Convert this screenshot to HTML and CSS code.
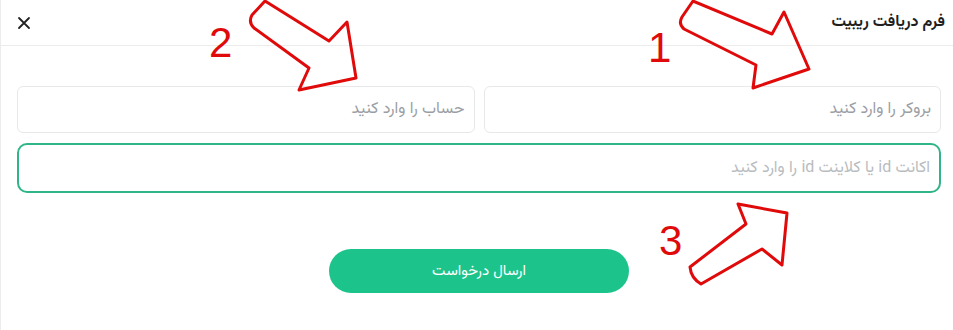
FILE: index.html
```html
<!DOCTYPE html>
<html lang="fa">
<head>
    <meta charset="UTF-8">
    <meta name="viewport" content="width=device-width, initial-scale=1.0">
    <title>فرم دریافت ریبیت</title>
    <link rel="stylesheet" href="styles.css">
</head>
<body>
    <div class="modal" dir="rtl">
        <div class="modal-header">
            <h3 class="modal-title">فرم دریافت ریبیت</h3>
            <button class="close-btn" type="button" aria-label="بستن">
                <svg width="14" height="14" viewBox="0 0 14 14">
                    <path d="M2 2 L12 12 M12 2 L2 12" stroke="#222" stroke-width="1.8" stroke-linecap="round"/>
                </svg>
            </button>
        </div>

        <form class="modal-body">
            <div class="row">
                <input class="field" type="text" placeholder="بروکر را وارد کنید">
                <input class="field" type="text" placeholder="حساب را وارد کنید">
            </div>
            <input class="field field-wide" type="text" placeholder="اکانت id یا کلاینت id را وارد کنید">
            <div class="actions">
                <button class="submit-btn" type="button">ارسال درخواست</button>
            </div>
        </form>

        <!-- hand drawn notes on top of the screenshot -->
        <svg class="notes" dir="ltr" width="953" height="330" viewBox="0 0 953 330">
            <g fill="none" stroke="#e00a0a" stroke-width="3" stroke-linejoin="round">
                <path d="M692 1 L771 34 L783 12 L808 69 L752 88 L755 65 L683 29 Q677 24 681 17 Z"/>
                <path d="M264 1 L328 41 L346 22 L355 78 L298 90 L308 68 L253 28 Q247 22 251 15 Z"/>
                <path d="M737 204 L786 213 L781 265 L761 249 L700 284 Q690 278 689 267 L745 224 Z"/>
            </g>
            <g class="note-num" fill="#e00a0a" font-family="Liberation Sans, Arial, sans-serif" font-size="42" text-anchor="start">
                <text x="647" y="62">1</text>
                <text x="208" y="57">2</text>
                <text x="658" y="255">3</text>
            </g>
        </svg>
    </div>
</body>
</html>
```

FILE: styles.css
```css
body {
    margin: 0;
    background-color: #fff;
    font-family: "Vazirmatn", "DejaVu Sans", "Noto Sans", sans-serif;
}

.modal {
    position: relative;
    width: 953px;
    height: 330px;
    border-left: 1px solid #ececec;
    box-sizing: border-box;
    background-color: #fff;
    overflow: hidden;
}

.modal-header {
    display: flex;
    justify-content: space-between;
    align-items: center;
    height: 45px;
    padding: 0 8px 0 16px;
    border-bottom: 1px solid #ececec;
}

.modal-title {
    margin: 0;
    font-size: 16px;
    font-weight: bold;
    color: #1f1f1f;
}

.close-btn {
    display: flex;
    padding: 0;
    border: none;
    background: none;
    cursor: pointer;
}

.modal-body {
    display: flex;
    flex-direction: column;
    gap: 10px;
    padding: 40px 12px 0 16px;
}

.row {
    display: flex;
    gap: 9px;
}

.field {
    flex: 1;
    min-width: 0;
    height: 47px;
    padding: 0 9px;
    border: 1px solid #e6e8ea;
    border-radius: 6px;
    box-sizing: border-box;
    font-family: inherit;
    font-size: 16px;
    color: #333;
    outline: none;
}

.field::placeholder {
    color: #9a9ea4;
}

.field-wide {
    flex: none;
    height: 50px;
    border: 2px solid #30b48a;
    border-radius: 10px;
}

.field-wide::placeholder {
    color: #b9bcc0;
}

.actions {
    display: flex;
    justify-content: center;
    margin-top: 46px;
}

.submit-btn {
    width: 300px;
    height: 44px;
    border: none;
    border-radius: 22px;
    background-color: #1cc48c;
    color: #fff;
    font-family: inherit;
    font-size: 15px;
    cursor: pointer;
}

.notes {
    position: absolute;
    top: 0;
    left: 0;
    pointer-events: none;
    direction: ltr;
}
```
